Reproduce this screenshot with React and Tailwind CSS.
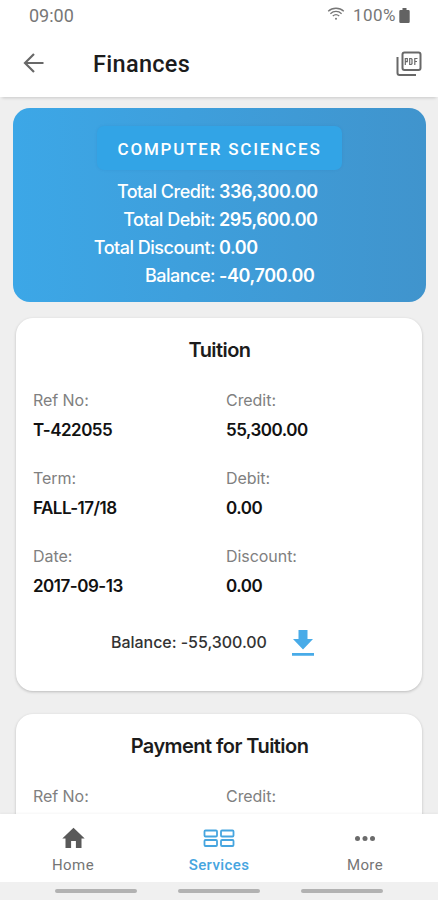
const summary = [
  ['Total Credit:', '336,300.00'],
  ['Total Debit:', '295,600.00'],
  ['Total Discount:', '0.00'],
  ['Balance:', '-40,700.00'],
];

const tuition = [
  ['Ref No:', 'T-422055'],
  ['Credit:', '55,300.00'],
  ['Term:', 'FALL-17/18'],
  ['Debit:', '0.00'],
  ['Date:', '2017-09-13'],
  ['Discount:', '0.00'],
];

function StatusBar() {
  return (
    <div className="flex h-[32px] items-center pr-[28px] pl-[29px] font-[Roboto,sans-serif] text-[17px] text-[#777]">
      <span className="grow pb-[2px] text-[18px]">09:00</span>
      <svg className="mr-[8px] mb-[4px]" width="18" height="14" viewBox="0 0 18 14" fill="none" stroke="#777" strokeWidth="1.3">
        <path d="M1.2 4.3C5.5.2 12.500.2 16.800 4.300M3.400 6.700c3.200-3 8-3 11.200 0M5.800 9c1.900-1.600 4.500-1.600 6.400 0" />
        <circle cx="9" cy="11.800" r="1" fill="#777" stroke="none" />
      </svg>
      <span className="tracking-[0.5px]">100%</span>
      <svg className="ml-[3px] mb-[2px]" width="11" height="15" viewBox="0 0 11 15" fill="#636363">
        <path d="M3.500 0h4v2H9.500a1.200 1.200 0 0 1 1.200 1.200v10.500a1.200 1.200 0 0 1-1.200 1.200h-8a1.200 1.200 0 0 1-1.200-1.200V3.200A1.200 1.200 0 0 1 1.500 2h2z" />
      </svg>
    </div>
  );
}

function Header() {
  return (
    <header className="relative flex h-[65px] items-center bg-white pr-[16px] pl-[23px] shadow-[0_3px_3px_-2px_rgba(0,0,0,0.16)]">
      <svg className="mb-[3px]" width="21" height="20" viewBox="0 0 21 20" fill="none" stroke="#686868" strokeWidth="2.200">
        <path d="M20.500 10H2.500M11 1L2 10l9 9" />
      </svg>
      <h1 className="ml-[49px] grow pt-px font-[Roboto,sans-serif] text-[23.5px] font-medium tracking-[0.3px] text-[#1c1c1c]">Finances</h1>
      <svg className="mb-[2px]" width="26" height="26" viewBox="0 0 26 26" fill="none" stroke="#686868" strokeWidth="2">
        <rect x="6.500" y="1.500" width="18" height="17.500" rx="2" />
        <path d="M1.500 6v16a2 2 0 0 0 2 2H20" />
        <path strokeWidth="1.200" d="M9.300 14V7.500h2v3.200h-2M13.700 7.500v6h1.500l.8-.8V8.300l-.8-.8zM18.800 14V7.500h2.700M18.800 10.500h2.200" />
      </svg>
    </header>
  );
}

function SummaryCard() {
  return (
    <section className="mr-[12px] ml-[13px] h-[194px] rounded-[17px] bg-linear-to-r from-[#3ca7e7] to-[#4094cd] pt-[18px] text-white">
      <div className="ml-[84px] flex h-[44px] w-[245px] items-center justify-center rounded-[7px] bg-[#32a4e6] pt-[3px] font-[Roboto,sans-serif] text-[17px] font-medium tracking-[1.8px] shadow-[0_0_3px_rgba(0,80,150,0.12)]">
        COMPUTER SCIENCES
      </div>
      <dl className="mt-[7px]">
        {summary.map(([label, value]) => (
          <div key={label} className="flex h-[28px] items-center text-[18px]">
            <dt className="w-[202px] text-right font-medium tracking-[-0.5px]">{label}</dt>
            <dd className="ml-[4px] font-semibold tracking-[-0.4px]">{value}</dd>
          </div>
        ))}
      </dl>
    </section>
  );
}

function TransactionCard({ title, children }) {
  return (
    <section className="mr-[16px] ml-[16px] h-[373px] shrink-0 rounded-[17px] bg-white pt-[17px] pl-[17px] shadow-[0_1px_3px_rgba(0,0,0,0.22)]">
      <h2 className="mr-[16px] text-center text-[20px] leading-[30px] font-semibold tracking-[-0.55px] text-[#1c1c1c]">{title}</h2>
      {children}
    </section>
  );
}

function Field({ label, value }) {
  return (
    <div className="h-[78px]">
      <div className="text-[16px] leading-[28px] tracking-[-0.05px] text-[#808080]">{label}</div>
      <div className="pt-px text-[17px] leading-[30px] font-semibold tracking-[-0.5px] text-[#111]">{value}</div>
    </div>
  );
}

function BottomNav() {
  return (
    <nav className="relative shrink-0 bg-white font-[Roboto,sans-serif] text-[15px] tracking-[0.4px] text-[#757575] shadow-[0_-1px_2px_rgba(0,0,0,0.04)]">
      <div className="grid h-[68px] grid-cols-3">
        <div className="flex flex-col items-center pt-[13px]">
          <svg width="23" height="22" viewBox="0 0 23 22" fill="#595959">
            <path d="M11.500.800L.300 11.500h3.200V21h5.600v-7h4.800v7h5.600v-9.500h3.200z" />
          </svg>
          <span className="mt-[6px] leading-[20px]">Home</span>
        </div>
        <div className="flex flex-col items-center pt-[13px] font-medium text-[#46a5df]">
          <svg width="32" height="22" viewBox="0 0 32 22" fill="none" stroke="#46a5df" strokeWidth="1.800">
            <rect x="1.500" y="3.500" width="12.500" height="6" rx="1" />
            <rect x="18" y="3.500" width="12.500" height="6" rx="1" />
            <rect x="1.500" y="13" width="12.500" height="6" rx="1" />
            <rect x="18" y="13" width="12.500" height="6" rx="1" />
          </svg>
          <span className="mt-[6px] leading-[20px]">Services</span>
        </div>
        <div className="flex flex-col items-center pt-[13px]">
          <svg width="22" height="22" viewBox="0 0 22 22" fill="#6b6b6b">
            <circle cx="3.500" cy="11.500" r="2.500" />
            <circle cx="11" cy="11.500" r="2.500" />
            <circle cx="18.500" cy="11.500" r="2.500" />
          </svg>
          <span className="mt-[6px] leading-[20px]">More</span>
        </div>
      </div>
      <div className="flex h-[18px] items-center justify-center gap-[41px] bg-[#f0f0f0]">
        <div className="h-[4px] w-[82px] rounded-full bg-[#b2b2b2]" />
        <div className="h-[4px] w-[82px] rounded-full bg-[#b2b2b2]" />
        <div className="h-[4px] w-[82px] rounded-full bg-[#b2b2b2]" />
      </div>
    </nav>
  );
}

export default function App() {
  return (
    <div className="flex h-[900px] w-[438px] flex-col overflow-hidden bg-white font-[Inter,sans-serif]">
      <StatusBar />
      <Header />
      <main className="h-[717px] overflow-hidden bg-[#efefef] pt-[11px]">
        <SummaryCard />
        <div className="mt-[16px] flex flex-col gap-[23px]">
          <TransactionCard title="Tuition">
            <div className="mt-[21px] grid grid-cols-[193px_1fr]">
              {tuition.map(([label, value]) => (
                <Field key={label} label={label} value={value} />
              ))}
            </div>
            <div className="mt-[7px] ml-[78px] flex h-[30px] items-center">
              <span className="text-[16px] font-medium tracking-[-0.04px] text-[#333]">Balance: -55,300.00</span>
              <svg className="mt-[2px] ml-[25px]" width="22" height="28" viewBox="0 0 22 28" fill="#48abe8">
                <path d="M6.500 1h9v9h5.500L11 20.500 1 10h5.500zM0 24h22v2.700H0z" />
              </svg>
            </div>
          </TransactionCard>
          <TransactionCard title="Payment for Tuition">
            <div className="mt-[21px] grid grid-cols-[193px_1fr]">
              <Field label="Ref No:" />
              <Field label="Credit:" />
            </div>
          </TransactionCard>
        </div>
      </main>
      <BottomNav />
    </div>
  );
}
